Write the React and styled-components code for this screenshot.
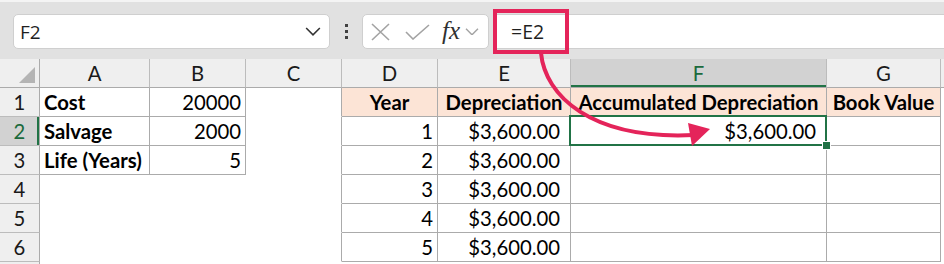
import React from "react";
import styled, { createGlobalStyle } from "styled-components";

const Global = createGlobalStyle`
  html, body { margin: 0; padding: 0; background: #ffffff; }
  body { width: 944px; height: 264px; overflow: hidden; }
`;

const Page = styled.div`
  position: relative;
  width: 944px;
  height: 264px;
  overflow: hidden;
  background: #ffffff;
`;

const Toolbar = styled.div`
  height: 59px;
  box-sizing: border-box;
  border-top: 2px solid #f4f4f4;
  background: #e1e1e1;
  display: flex;
  align-items: flex-start;
  padding-top: 12px;
  padding-left: 13px;
`;

const Box = styled.div`
  height: 35px;
  box-sizing: border-box;
  background: #ffffff;
  border: 1px solid #cfcfcf;
  border-radius: 5px;
  display: flex;
  align-items: center;
`;

const NameBox = styled(Box)`
  width: 317px;
  padding: 0 8px 0 6px;
  justify-content: space-between;
  font-family: "Open Sans", "Noto Sans", sans-serif;
  font-size: 19px;
  color: #1f1f1f;
`;

const Dots = styled.div`
  width: 32px;
  height: 35px;
  display: flex;
  flex-direction: column;
  align-items: center;
  justify-content: center;
  gap: 3px;
  span {
    width: 3px;
    height: 3px;
    background: #404040;
  }
`;

const FxBox = styled(Box)`
  width: 127px;
  padding: 0 0 0 8px;
  gap: 14px;
`;

const FxGroup = styled.span`
  display: flex;
  align-items: center;
  gap: 5px;
  margin-left: -2px;
`;

const FxText = styled.span`
  font-family: "Liberation Serif", "DejaVu Serif", serif;
  font-style: italic;
  font-size: 25px;
  color: #303030;
  line-height: 1;
  margin-top: -3px;
`;

const FormulaBar = styled.div`
  position: relative;
  flex: 1;
  margin-left: 5px;
  height: 35px;
  box-sizing: border-box;
  background: #ffffff;
  border-top: 1px solid #cfcfcf;
  border-bottom: 1px solid #cfcfcf;
  display: flex;
  align-items: center;
  padding-left: 17px;
  font-family: "Open Sans", "Noto Sans", sans-serif;
  font-size: 19.5px;
  color: #1f1f1f;
`;

const Highlight = styled.div`
  position: absolute;
  left: -1px;
  top: -6px;
  width: 76px;
  height: 45px;
  box-sizing: border-box;
  border: 4px solid #e4245a;
`;

const Grid = styled.div`
  display: grid;
  grid-template-columns: 40px 110px 96px 96px 96px 133px 256px 114px 100px;
  grid-auto-rows: 29px;
  font-family: Lato, "Open Sans", sans-serif;
  font-size: 20.3px;
  color: #000000;
`;

const Corner = styled.div`
  position: relative;
  background: #efefef;
  border-right: 1px solid #ababab;
  border-bottom: 1px solid #ababab;
  &::after {
    content: "";
    position: absolute;
    right: 4px;
    bottom: 4px;
    width: 0;
    height: 0;
    border-left: 16px solid transparent;
    border-bottom: 16px solid #b4b4b4;
  }
`;

const ColHead = styled.div`
  box-sizing: border-box;
  background: ${(p) => (p.$sel ? "#d2d2d2" : "#efefef")};
  color: ${(p) => (p.$sel ? "#1b6a3c" : "#1a1a1a")};
  border-right: 1px solid #bcbcbc;
  border-bottom: 1px solid #ababab;
  box-shadow: ${(p) => (p.$sel ? "inset 0 -2px 0 #217346" : "none")};
  display: flex;
  align-items: center;
  justify-content: center;
  line-height: 28px;
`;

const RowHead = styled.div`
  box-sizing: border-box;
  background: ${(p) => (p.$sel ? "#d2d2d2" : "#efefef")};
  color: ${(p) => (p.$sel ? "#1b6a3c" : "#1a1a1a")};
  border-right: 1px solid #ababab;
  border-bottom: 1px solid #bcbcbc;
  box-shadow: ${(p) => (p.$sel ? "inset -2px 0 0 #217346" : "none")};
  text-align: center;
  line-height: 28px;
`;

const Cell = styled.div`
  position: relative;
  box-sizing: border-box;
  background: ${(p) => p.$bg || "#ffffff"};
  border-right: 1px solid ${(p) => (p.$r ? "#ababab" : "transparent")};
  border-bottom: 1px solid ${(p) => (p.$b ? "#ababab" : "transparent")};
  font-weight: ${(p) => (p.$bold ? 700 : 400)};
  text-align: ${(p) => p.$align || "left"};
  padding: 0 ${(p) => p.$pr ?? 4}px 0 4px;
  line-height: 28px;
  white-space: nowrap;
  overflow: visible;
`;

const Selected = styled(Cell)`
  z-index: 2;
  &::before {
    content: "";
    position: absolute;
    left: -2px;
    top: -2px;
    right: -1px;
    bottom: -1px;
    border: 2px solid #217346;
    pointer-events: none;
  }
  &::after {
    content: "";
    position: absolute;
    right: -5px;
    bottom: -5px;
    width: 7px;
    height: 7px;
    background: #217346;
    border: 1px solid #ffffff;
  }
`;

const Overlay = styled.svg`
  position: absolute;
  left: 0;
  top: 0;
  z-index: 5;
  pointer-events: none;
`;

const PEACH = "#fce4d6";
const cols = ["A", "B", "C", "D", "E", "F", "G"];
const money = "$3,600.00";

const Chevron = ({ color = "#333", w = 16 }) => (
  <svg width={w} height={w * 0.55} viewBox="0 0 16 9" fill="none">
    <path d="M1 1l7 7 7-7" stroke={color} strokeWidth="1.6" />
  </svg>
);

export default function App() {
  const left = [
    ["Cost", "20000"],
    ["Salvage", "2000"],
    ["Life (Years)", "5"],
  ];
  const rows = [];
  for (let r = 1; r <= 7; r++) {
    const inLeft = r <= 3;
    const inTable = r <= 6;
    rows.push(
      <RowHead key={`h${r}`} $sel={r === 2}>
        {r <= 6 ? r : ""}
      </RowHead>
    );
    rows.push(
      <Cell key={`a${r}`} $r={inLeft} $b={inLeft} $bold>
        {inLeft ? left[r - 1][0] : ""}
      </Cell>
    );
    rows.push(
      <Cell key={`b${r}`} $r={inLeft} $b={inLeft} $align="right">
        {inLeft ? left[r - 1][1] : ""}
      </Cell>
    );
    rows.push(<Cell key={`c${r}`} $r={inTable} />);
    if (r === 1) {
      rows.push(
        <Cell key="d1" $r $b $bold $bg={PEACH} $align="center">
          Year
        </Cell>
      );
      rows.push(
        <Cell key="e1" $r $b $bold $bg={PEACH} $align="center">
          Depreciation
        </Cell>
      );
      rows.push(
        <Cell key="f1" $r $b $bold $bg={PEACH} $align="center">
          Accumulated Depreciation
        </Cell>
      );
      rows.push(
        <Cell key="g1" $r $b $bold $bg={PEACH} $align="center">
          Book Value
        </Cell>
      );
    } else if (inTable) {
      rows.push(
        <Cell key={`d${r}`} $r $b $align="right">
          {r - 1}
        </Cell>
      );
      rows.push(
        <Cell key={`e${r}`} $r $b $align="right" $pr={10}>
          {money}
        </Cell>
      );
      if (r === 2) {
        rows.push(
          <Selected key="f2" $r $b $align="right" $pr={10}>
            {money}
          </Selected>
        );
      } else {
        rows.push(<Cell key={`f${r}`} $r $b />);
      }
      rows.push(<Cell key={`g${r}`} $r $b />);
    } else {
      rows.push(<Cell key={`d${r}`} />);
      rows.push(<Cell key={`e${r}`} />);
      rows.push(<Cell key={`f${r}`} />);
      rows.push(<Cell key={`g${r}`} />);
    }
    rows.push(<Cell key={`x${r}`} />);
  }

  return (
    <Page>
      <Global />
      <Toolbar>
        <NameBox>
          <span>F2</span>
          <Chevron />
        </NameBox>
        <Dots>
          <span />
          <span />
          <span />
        </Dots>
        <FxBox>
          <svg width="20" height="18" viewBox="0 0 20 18" fill="none">
            <path d="M1 1l17 16M18 1L1 17" stroke="#a3a3a3" strokeWidth="1.6" />
          </svg>
          <svg width="25" height="16" viewBox="0 0 25 16" fill="none">
            <path d="M1 8l7 7L24 1" stroke="#a3a3a3" strokeWidth="1.6" />
          </svg>
          <FxGroup>
            <FxText>fx</FxText>
            <Chevron color="#a3a3a3" w={14} />
          </FxGroup>
        </FxBox>
        <FormulaBar>
          <Highlight />
          =E2
        </FormulaBar>
      </Toolbar>
      <Grid>
        <Corner />
        {cols.map((c) => (
          <ColHead key={c} $sel={c === "F"}>
            {c}
          </ColHead>
        ))}
        <ColHead />
        {rows}
      </Grid>
      <Overlay width="944" height="264" viewBox="0 0 944 264">
        <path
          d="M541 53 C545 95, 590 140, 694 135"
          stroke="#e4245a"
          strokeWidth="4"
          fill="none"
        />
        <polygon points="688,123 710,129 692,146" fill="#e4245a" />
      </Overlay>
    </Page>
  );
}
